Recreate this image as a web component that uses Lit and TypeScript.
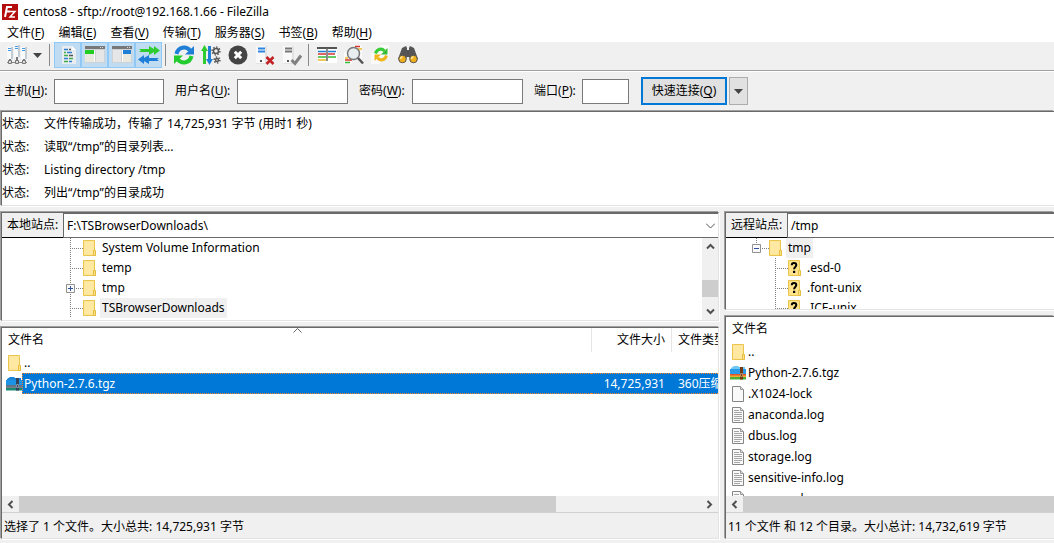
import { LitElement, html, svg, css, nothing } from 'lit';
import { customElement, property } from 'lit/decorators.js';

const folder = html`<svg width="14" height="16" viewBox="0 0 14 16" aria-hidden="true">
  <path d="M.5.5h11v10.500h1v4.500H.5z" fill="#ffe69a" stroke="#eac54d" />
  <path d="M1.500 1.500h9v12h-9z" fill="#ffe9a2" /><path d="M10.500 10.500h2v5h-2z" fill="#ffe28a" stroke="#e6bd3e" />
</svg>`;

const unknownFolder = html`<svg width="14" height="16" viewBox="0 0 14 16" aria-hidden="true">
  <path d="M.5.5h11v10.500h1v4.500H.5z" fill="#ffe28c" stroke="#eac54d" />
  <path d="M10.500 10.500h2v5h-2z" fill="#ffe28a" stroke="#e6bd3e" />
  <path d="M3.800 5.300C3.800 3.600 4.800 3 6 3s2.300.7 2.300 2.100C8.300 7 6.100 7 6.100 9.200" fill="none" stroke="#000" stroke-width="2" />
  <path d="M5 10.800h2.200V13H5z" />
</svg>`;

const page = (lines: boolean) => html`<svg width="12" height="16" viewBox="0 0 12 16" aria-hidden="true">
  <path d="M.5.5h8l3 3v12H.5z" fill="#f9f9f9" stroke="#858585" />
  <path d="M8.500.5v3h3" fill="#ddd" stroke="#999" />
  ${lines ? svg`<path d="M2 3.500h5M2 5.500h8M2 7.500h8M2 9.500h8M2 11.500h8M2 13.500h6" stroke="#a5a5a5" />` : nothing}
</svg>`;

const archive = (dim: boolean) => html`<svg width="16" height="14" viewBox="0 0 16 14" aria-hidden="true">
  <path d="M1 4V2l3-2h4l1 1h6v4H1z" fill=${dim ? '#1a84d8' : '#6fc7f5'} />
  <path d="M0 3h16v6H0z" fill=${dim ? '#1c93e4' : '#2b9be8'} />
  <path d="M0 8h16v2H0z" fill=${dim ? '#5f7285' : '#e0572c'} />
  <path d="M0 9.500h16V11H0z" fill=${dim ? '#71818a' : '#f0a92e'} />
  <path d="M0 11h16v2.500H0z" fill=${dim ? '#1c8a75' : '#4fae38'} />
  <path d="M10 1h3v12.500h-3z" fill=${dim ? '#31435c' : '#723a16'} />
  <path d="M10.500 7.500h2v3h-2z" fill="none" stroke=${dim ? '#8296aa' : '#b98f62'} />
</svg>`;

const chevron = (d: string) => html`<svg width="9" height="9" viewBox="0 0 9 9" aria-hidden="true">
  <path d=${d} fill="none" stroke="#505050" stroke-width="2" />
</svg>`;
const up = 'M1 6.500 4.500 3 8 6.500';
const down = 'M1 2.500 4.500 6 8 2.500';
const left = 'M6.500 1 3 4.500 6.500 8';
const right = 'M2.500 1 6 4.500 2.500 8';

const server = (x: number, y: number) => svg`<path d="M${x} ${y}h6v12h-6z" fill="#f8fafb" /><path d="M${x + 4} ${y}h2v12h-2z" fill="#c3ccd2" />
  <path d="M${x + 1} ${y + 1.5}h3M${x + 1} ${y + 3.5}h3" stroke="#3f9be8" /><path d="M${x + 3} ${y + 12}v3" stroke="#777" stroke-width="2" />`;
const gear = (x: number, y: number, r: number) => svg`<circle cx=${x} cy=${y} r=${r} fill="none" stroke="#555" stroke-width="1.500" />
  <circle cx=${x} cy=${y} r=${r + 1.4} fill="none" stroke="#555" stroke-width="1.500" stroke-dasharray="1.500 1.500" />`;
const tower = svg`<path d="M2 2h11v18H2z" fill="#e2e2e2" /><path d="M2 2h9v17H2z" fill="#f9f9f9" /><path d="M6 16h2v2H6z" fill="#555" />`;

const art: Record<string, unknown> = {
  sites: svg`${server(1, 3)}${server(8, 1)}${server(15, 3)}<path d="M1 18.500h20" stroke="#888" />
    <path d="M2.500 16.500h3v3h-3zM9.500 16.500h3v3h-3zM16.500 16.500h3v3h-3z" fill="#ddd" stroke="#777" />`,
  log: svg`<path d="M5 2h10l4 4v14H5z" fill="#e9edf0" /><path d="M15 2v4h4z" fill="#fff" />
    <path d="M7 5.500h4M10 8.500h5M7 14.500h4M12 17.500h3" stroke="#2a7fd0" stroke-width="1.500" />
    <path d="M7 8.500h2M7 11.500h4M12 14.500h4M7 17.500h4" stroke="#3fae49" stroke-width="1.500" /><path d="M12 5.500h2M12 11.500h4" stroke="#555" stroke-width="1.500" />`,
  localTree: svg`<path d="M1 3h20v16H1z" fill="#cfd2d4" /><path d="M1 2h20v3H1z" fill="#777" /><path d="M16 3.500h4" stroke="#ddd" stroke-dasharray="1 1" />
    <path d="M1 6h9v4H1z" fill="#22cc22" /><path d="M1 10h9v8H1z" fill="#e9e9e0" /><path d="M12 6h8v12h-8z" fill="#e6e6e6" /><path d="M10.500 6v12" stroke="#fff" />`,
  remoteTree: svg`<path d="M1 3h20v16H1z" fill="#cfd2d4" /><path d="M1 2h20v3H1z" fill="#777" /><path d="M16 3.500h4" stroke="#ddd" stroke-dasharray="1 1" />
    <path d="M12 6h8v4h-8z" fill="#1f7fd6" /><path d="M12 10h8v8h-8z" fill="#e9e9e0" /><path d="M2 6h8v12H2z" fill="#e6e6e6" /><path d="M11.500 6v12" stroke="#fff" />`,
  queue: svg`<path d="M1 5h10V2l5 3V2l6 4.500-6 4.500V8l-5 3V8H1l2-1.500z" fill="#2ecc2e" /><path d="M21 14H11v-3l-5 3v-3L0 15.500 6 20v-3l5 3v-3h10l-2-1.500z" fill="#1f7fd6" />`,
  refresh: svg`<path d="M3.500 10C5 3 13 1.500 17 6.500" fill="none" stroke="#1f7fd6" stroke-width="4" /><path d="M21 2v8.500h-9z" fill="#1f7fd6" />
    <path d="M18.500 12C17 19 9 20.500 5 15.500" fill="none" stroke="#22cc2e" stroke-width="4" /><path d="M1 20v-8.500h9z" fill="#22cc2e" />`,
  process: svg`<path d="M4.500 20V5" stroke="#2ecc2e" stroke-width="3" /><path d="M1 7l3.500-6L8 7z" fill="#2ecc2e" />
    <path d="M9.500 2v15" stroke="#1f7fd6" stroke-width="3" /><path d="M6 15l3.500 6 3.500-6z" fill="#1f7fd6" />${gear(16, 7, 2.5)}${gear(17, 16, 1.5)}`,
  cancel: svg`<circle cx="11" cy="11" r="9.500" fill="#444" /><path d="M7.800 7.800l6.400 6.400m0-6.400-6.400 6.400" stroke="#fff" stroke-width="3" />`,
  disconnect: svg`${tower}<path d="M4 4.500h7M4 7.500h7" stroke="#2f86e2" stroke-width="2" /><path d="M12.500 13l7 7m0-7-7 7" stroke="#c31f25" stroke-width="2.500" />`,
  reconnect: svg`${tower}<path d="M4 4.500h7M4 7.500h7" stroke="#777" stroke-width="2" /><path d="M10.500 16l3.500 3.500 6-8" fill="none" stroke="#808080" stroke-width="3" />`,
  filter: svg`<path d="M2 4h19v15H2z" fill="#fff" /><path d="M1 4h20" stroke="#555" stroke-width="2" /><path d="M2 7.500h8M12 7.500h8" stroke="#1f7fd6" stroke-width="1.500" />
    <path d="M2 10h8M12 10h7" stroke="#d8332f" stroke-width="1.500" /><path d="M2 13h8M12 13h8" stroke="#35bb36" stroke-width="1.500" /><path d="M2 16h8" stroke="#efba24" stroke-width="1.500" /><path d="M11 4v13" stroke="#666" stroke-width="1.500" />`,
  compare: svg`<path d="M10 1h9v14h-9zM1 8h8v12H1z" fill="#fafafa" /><path d="M12 2.500h5M2 16h7" stroke="#d8332f" stroke-width="1.500" /><path d="M15 5h4M2 14h3" stroke="#efba24" stroke-width="1.500" /><path d="M2 18.500h5" stroke="#35bb36" stroke-width="1.500" />
    <circle cx="10.500" cy="9.500" r="6" fill="#e9eef1" stroke="#777" stroke-width="1.500" /><path d="M15 14l5 5.500" stroke="#555" stroke-width="2.500" />`,
  sync: svg`<path d="M10 1h9v13h-9zM1 9h9v11H1z" fill="#fafafa" /><path d="M5.500 9.500C7 4.500 12 4 14.500 7" fill="none" stroke="#35cc36" stroke-width="3" /><path d="M17.500 4v6.500h-6.500z" fill="#35bb36" />
    <path d="M16.500 11.500C15 16.500 10 17 7.500 14" fill="none" stroke="#efb51c" stroke-width="3" /><path d="M4.500 17v-6.500H11z" fill="#efb51c" />`,
  search: svg`<path d="M5 4l4-2 1 2v2h2V4l1-2 4 2 4 11-7 2-2-4h-2l-2 4-7-2z" fill="#555" /><circle cx="5.500" cy="15" r="3.800" fill="#f0ad1c" stroke="#555" /><circle cx="16.500" cy="15" r="3.800" fill="#f0ad1c" stroke="#555" />
    <path d="M3.500 15a2 2 0 0 1 2-2M14.500 15a2 2 0 0 1 2-2" fill="none" stroke="#ffe9a0" stroke-width="1.500" />`,
};

const key = (text: string, letter: string, tail = '') => html`${text}(<u>${letter}</u>)${tail}`;

@customElement('scroll-bar')
class ScrollBar extends LitElement {
  @property({ type: Boolean, reflect: true }) vertical = false;
  @property({ type: Boolean }) open = false;
  @property({ type: Number }) before = 0;
  @property({ type: Number }) thumb = 1;
  @property({ type: Number }) after = 0;

  static styles = css`
    :host { display: flex; height: 16px; background: #f0f0f0; flex: none; }
    :host([vertical]) { flex-direction: column; width: 16px; height: auto; }
    button { flex: none; width: 17px; height: 16px; padding: 0; border: 0; background: none; display: grid; place-items: center; }
    :host([vertical]) button { width: 16px; height: 17px; }
    .track { flex: 1; display: flex; flex-direction: inherit; min-width: 0; min-height: 0; }
    .thumb { background: #cdcdcd; }
  `;

  render() {
    return html`<button aria-label="后退">${chevron(this.vertical ? up : left)}</button>
      <div class="track">
        <div style="flex:${this.before}"></div><div class="thumb" style="flex:${this.thumb}"></div><div style="flex:${this.after}"></div>
      </div>
      ${this.open ? nothing : html`<button aria-label="前进">${chevron(this.vertical ? down : right)}</button>`}`;
  }
}

@customElement('app-root')
class AppRoot extends LitElement {
  static styles = css`
    :host {
      display: flex; flex-direction: column; height: 100vh; min-height: 400px; overflow: hidden; background: #f0f0f0; color: #000;
      font: 12px/20px "Noto Sans", "Noto Sans CJK SC", sans-serif; white-space: nowrap;
    }
    * { box-sizing: border-box; }
    svg { display: block; flex: none; }
    button, input { font: inherit; color: inherit; border-radius: 0; margin: 0; }
    u { text-underline-offset: 2px; }
    .title { display: flex; align-items: center; gap: 5px; height: 23px; padding-left: 2px; background: #fff; flex: none; }
    .menu { display: flex; gap: 14px; height: 19px; padding-left: 7px; background: #fff; flex: none; }
    .menu button { border: 0; background: none; padding: 0; line-height: 19px; }
    .tools { display: flex; align-items: center; height: 30px; padding: 0 2px 3px 3px; border-bottom: 1px solid #fff; box-shadow: inset 0 -1px #a0a0a0; flex: none; }
    .tool { width: 27px; height: 26px; padding: 0; border: 1px solid transparent; background: none; display: grid; place-items: center; }
    .tool[aria-pressed="true"] { background: #c0dcf3; border-color: #90c8f6; }
    .drop { width: 15px; }
    .rule { width: 1px; height: 22px; background: #888; margin: 0 4px; }
    .rule ~ .rule { margin-left: 3px; }
    .connect {
      display: grid; grid-template-columns: 50px 110px 73px 111px 64px 111px 59px 47px auto auto; justify-content: start; align-items: center;
      height: 38px; padding-left: 4px; flex: none;
    }
    .connect label + input { min-width: 0; width: 100%; height: 25px; border: 1px solid #7a7a7a; background: #fff; }
    .connect input + label { padding-left: 11px; }
    .go { width: 86px; height: 28px; margin-left: 12px; padding: 0; border: 2px solid #0078d7; background: #e1e1e1; }
    .more { width: 19px; height: 28px; margin-left: 2px; padding: 0; border: 1px solid #adadad; background: #e1e1e1; display: grid; place-items: center; }
    .sunken {
      margin: 1px; border: 1px solid; border-color: #696969 #e3e3e3 #e3e3e3 #696969; background: #fff; overflow: hidden;
      box-shadow: -1px -1px #a0a0a0, 1px 1px #fff;
    }
    .log { height: 95px; flex: none; margin-right: 0; list-style: none; padding: 0; border-right: 0; }
    .log li { display: grid; grid-template-columns: 42px 1fr; line-height: 23px; }
    .panes { flex: 1; min-height: 0; display: grid; grid-template-columns: 24fr 11fr; gap: 4px; padding: 4px 0 3px; }
    .pane { min-width: 0; min-height: 0; display: flex; flex-direction: column; gap: 4px; }
    .remote .sunken { border-right: 0; margin-right: 0; }
    .site { flex: none; display: flex; flex-direction: column; }
    .local .site { height: 109px; }
    .remote .site { height: 98px; }
    .address { display: flex; height: 25px; flex: none; }
    .address label { width: 61px; padding-left: 5px; border-bottom: 1px solid #000; background: #f0f0f0; line-height: 24px; flex: none; }
    .address input { flex: 1; min-width: 0; padding: 0 3px; border: 1px solid #696969; border-width: 1px 0 1px 1px; background: #fff; }
    .address button { width: 16px; padding: 0; border: 1px solid #696969; border-width: 1px 0; background: #fff; display: grid; place-items: center; }
    .browse { flex: 1; min-height: 0; display: flex; }
    .tree { flex: 1; margin: 0; padding: 0; list-style: none; overflow: hidden; }
    .node { display: flex; align-items: center; height: 20px; padding-left: 64px; }
    .node.top { padding-left: 26px; }
    .node.child { padding-left: 45px; }
    .name { margin-left: 3px; padding: 0 2px; }
    .current { background: #f0f0f0; }
    .files { flex: 1; min-height: 0; display: flex; flex-direction: column; }
    .view { flex: 1; min-height: 0; overflow: hidden; }
    table { width: 100%; table-layout: fixed; border-collapse: separate; border-spacing: 0; }
    th { height: 24px; padding: 0 6px; font-weight: 400; text-align: left; overflow: hidden; position: relative; }
    .size { text-align: right; }
    th + th { border-left: 1px solid #e5e5e5; }
    .sort { position: absolute; top: 0; left: 50%; margin-left: -4px; }
    td { height: 21px; padding: 0 2px; line-height: 19px; overflow: hidden; }
    td.icon { padding: 0; }
    td.icon svg { margin: 0 auto 0 6px; }
    td.icon.wide svg { margin-left: 4px; }
    td.size { padding-right: 6px; }
    td.type { padding-left: 7px; }
    .selected td:not(.icon) { background: #0078d7; color: #fff; border: dotted #ff8728; border-width: 1px 0; }
    .selected .icon + td { border-left-width: 1px; padding-left: 1px; }
    .status { height: 26px; flex: none; padding: 1px 2px 0; border-top: 1px solid #d0d0d0; background: #f0f0f0; line-height: 25px; }
  `;

  private tool(name: string, label: string, pressed = false) {
    return html`<button class="tool" aria-label=${label} aria-pressed=${pressed ? 'true' : nothing}>
      <svg width="22" height="22" viewBox="0 0 22 22" aria-hidden="true">${art[name]}</svg>
    </button>`;
  }

  private branch(toggle: '' | '+' | '-', from: number, to: number) {
    return html`<svg width="17" height="20" viewBox="0 0 17 20" aria-hidden="true">
      <path d="M4.500 ${from}V${to}M6 10.500h11" stroke="#808080" stroke-dasharray="1 1" />
      ${toggle ? svg`<path d="M.5 6.500h8v8h-8z" fill="#fafafa" stroke="#919191" /><path d="M2 10.500h5${toggle === '+' ? 'M4.500 8v5' : ''}" stroke="#2f4f9f" />` : nothing}
    </svg>`;
  }

  private file(name: string, icon: unknown, wide = false) {
    return html`<tr><td class="icon ${wide ? 'wide' : ''}">${icon}</td><td>${name}</td></tr>`;
  }

  render() {
    const messages = ['文件传输成功，传输了 14,725,931 字节 (用时1 秒)', '读取“/tmp”的目录列表...', 'Listing directory /tmp', '列出“/tmp”的目录成功'];
    const menus = [['文件', 'F'], ['编辑', 'E'], ['查看', 'V'], ['传输', 'T'], ['服务器', 'S'], ['书签', 'B'], ['帮助', 'H']];
    const arrow = html`<svg width="9" height="5" viewBox="0 0 9 5" aria-hidden="true"><path d="M0 0h9L4.500 5z" fill="#444" /></svg>`;
    return html`
      <header class="title">
        <svg width="16" height="16" viewBox="0 0 16 16" aria-hidden="true"><path d="M0 0h16v16H0z" fill="#b30d0d" />
          <path d="M3 13 5 3h5M4 7.500h4" fill="none" stroke="#fff" stroke-width="2" /><path d="M8 7.500h5L8 13h5" fill="none" stroke="#fff" stroke-width="1.500" /></svg>
        <span>centos8 - sftp://root@192.168.1.66 - FileZilla</span>
      </header>
      <nav class="menu">${menus.map(([t, k]) => html`<button>${key(t, k)}</button>`)}</nav>
      <div class="tools">
        ${this.tool('sites', '站点管理器')}<button class="tool drop" aria-label="站点列表">${arrow}</button><span class="rule"></span>
        ${this.tool('log', '消息日志', true)}${this.tool('localTree', '本地目录树', true)}${this.tool('remoteTree', '远程目录树', true)}${this.tool('queue', '传输队列', true)}
        <span class="rule"></span>
        ${this.tool('refresh', '刷新')}${this.tool('process', '处理队列')}${this.tool('cancel', '取消')}${this.tool('disconnect', '断开')}${this.tool('reconnect', '重新连接')}
        <span class="rule"></span>
        ${this.tool('filter', '过滤')}${this.tool('compare', '目录比较')}${this.tool('sync', '同步浏览')}${this.tool('search', '搜索')}
      </div>
      <form class="connect" @submit=${(e: Event) => e.preventDefault()}>
        <label for="host">${key('主机', 'H', ':')}</label><input id="host" />
        <label for="user">${key('用户名', 'U', ':')}</label><input id="user" />
        <label for="pass">${key('密码', 'W', ':')}</label><input id="pass" type="password" />
        <label for="port">${key('端口', 'P', ':')}</label><input id="port" />
        <button class="go">${key('快速连接', 'Q')}</button>
        <button class="more" type="button" aria-label="历史">${arrow}</button>
      </form>
      <ul class="log sunken">${messages.map((m) => html`<li><span>状态:</span><span>${m}</span></li>`)}</ul>
      <main class="panes">
        <section class="pane local">
          <div class="site sunken">
            <div class="address"><label for="local">本地站点:</label><input id="local" value="F:\\TSBrowserDownloads\\" />
              <button aria-label="展开"><svg width="9" height="9" viewBox="0 0 9 9"><path d="M0 2.500 4.500 7 9 2.500" fill="none" stroke="#555" /></svg></button></div>
            <div class="browse">
              <ul class="tree">
                <li class="node">${this.branch('', 0, 20)}${folder}<span class="name">System Volume Information</span></li>
                <li class="node">${this.branch('', 0, 20)}${folder}<span class="name">temp</span></li>
                <li class="node">${this.branch('+', 0, 20)}${folder}<span class="name">tmp</span></li>
                <li class="node">${this.branch('', 0, 20)}${folder}<span class="name current">TSBrowserDownloads</span></li>
              </ul>
              <scroll-bar vertical .before=${25} .thumb=${17} .after=${6}></scroll-bar>
            </div>
          </div>
          <div class="files sunken">
            <div class="view"><table>
              <colgroup><col width="20" /><col /><col width="80" /><col width="47" /></colgroup>
              <thead><tr><th colspan="2">文件名<svg class="sort" width="9" height="5" viewBox="0 0 9 5"><path d="M.5 4.500l4-4 4 4" fill="none" stroke="#666" /></svg></th><th class="size">文件大小</th><th>文件类型</th></tr></thead>
              <tbody>
                <tr><td class="icon">${folder}</td><td>..</td><td></td><td></td></tr>
                <tr class="selected"><td class="icon wide">${archive(true)}</td><td>Python-2.7.6.tgz</td><td class="size">14,725,931</td><td class="type">360压缩</td></tr>
              </tbody>
            </table></div>
            <scroll-bar .before=${0} .thumb=${537} .after=${145}></scroll-bar>
            <div class="status">选择了 1 个文件。大小总共: 14,725,931 字节</div>
          </div>
        </section>
        <section class="pane remote">
          <div class="site sunken">
            <div class="address"><label for="remote">远程站点:</label><input id="remote" value="/tmp" /></div>
            <ul class="tree">
              <li class="node top">${this.branch('-', 0, 6)}${folder}<span class="name current">tmp</span></li>
              ${['.esd-0', '.font-unix', '.ICE-unix'].map((n) => html`<li class="node child">${this.branch('', 0, 20)}${unknownFolder}<span class="name">${n}</span></li>`)}
            </ul>
          </div>
          <div class="files sunken">
            <div class="view"><table>
              <colgroup><col width="20" /><col /></colgroup>
              <thead><tr><th colspan="2">文件名</th></tr></thead>
              <tbody>
                ${this.file('..', folder)}${this.file('Python-2.7.6.tgz', archive(false), true)}${this.file('.X1024-lock', page(false))}
                ${['anaconda.log', 'dbus.log', 'storage.log', 'sensitive-info.log', 'program.log'].map((n) => this.file(n, page(true)))}
              </tbody>
            </table></div>
            <scroll-bar open></scroll-bar>
            <div class="status">11 个文件 和 12 个目录。大小总计: 14,732,619 字节</div>
          </div>
        </section>
      </main>`;
  }
}
